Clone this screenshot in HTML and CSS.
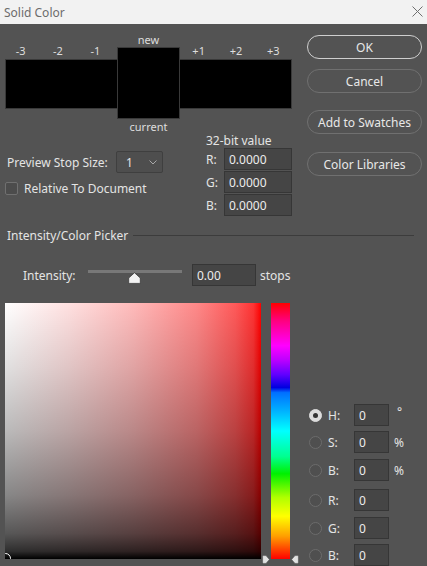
FILE: index.html
```html
<!DOCTYPE html>
<html lang="en">
<head>
<meta charset="utf-8">
<title>Solid Color</title>
<link rel="stylesheet" href="styles.css">
</head>
<body>
<div class="titlebar">
  <span class="title">Solid Color</span>
  <svg class="close" width="11" height="11" viewBox="0 0 11 11"><path d="M0.5 0.5 L10.5 10.5 M10.5 0.5 L0.5 10.5" stroke="#6f6f6f" stroke-width="1" fill="none"/></svg>
</div>
<div class="dialog">
  <div class="top">
    <div class="left">
      <div class="swatches">
        <div class="side side-left">
          <div class="labels"><span>-3</span><span>-2</span><span>-1</span></div>
          <div class="strip"></div>
        </div>
        <div class="center">
          <div class="clabel">new</div>
          <div class="cbox"></div>
          <div class="clabel current">current</div>
        </div>
        <div class="side side-right">
          <div class="labels"><span>+1</span><span>+2</span><span>+3</span></div>
          <div class="strip"></div>
        </div>
      </div>
      <div class="controls">
        <div class="prefs">
          <div class="stop-row">
            <span class="stop-label">Preview Stop Size:</span>
            <div class="select"><span>1</span>
              <svg width="8" height="5" viewBox="0 0 8 5"><path d="M0.5 0.5 L4 4 L7.5 0.5" stroke="#a8a8a8" stroke-width="1" fill="none"/></svg>
            </div>
          </div>
          <div class="check-row"><span class="checkbox"></span><span>Relative To Document</span></div>
        </div>
        <div class="bits">
          <div class="bits-title">32-bit value</div>
          <div class="bit-row"><span class="bl">R:</span><div class="field-input wide">0.0000</div></div>
          <div class="bit-row"><span class="bl">G:</span><div class="field-input wide">0.0000</div></div>
          <div class="bit-row"><span class="bl">B:</span><div class="field-input wide">0.0000</div></div>
        </div>
      </div>
    </div>
    <div class="buttons">
      <div class="btn primary b-ok">OK</div>
      <div class="btn b-cancel">Cancel</div>
      <div class="btn b-add">Add to Swatches</div>
      <div class="btn b-lib">Color Libraries</div>
    </div>
  </div>

  <div class="section"><span>Intensity/Color Picker</span><div class="rule"></div></div>

  <div class="intensity">
    <span class="int-label">Intensity:</span>
    <div class="slider">
      <div class="track"></div>
      <svg class="thumb" width="13" height="12" viewBox="0 0 13 12"><path d="M6.5 0.7 L12.3 6 L12.3 10.6 Q12.3 11.4 11.5 11.4 L1.5 11.4 Q0.7 11.4 0.7 10.6 L0.7 6 Z" fill="#f2f2f2" stroke="#3a3a3a" stroke-width="0.8"/></svg>
    </div>
    <div class="field-input int-input">0.00</div>
    <span class="stops">stops</span>
  </div>

  <div class="picker">
    <div class="color-field">
      <div class="marker"></div>
    </div>
    <div class="hue-wrap">
      <div class="hue"></div>
      <svg class="arrow arrow-l" width="8" height="9" viewBox="0 0 8 9"><path d="M0.6 1.4 Q0.6 0.6 1.4 0.6 L4 0.6 L7.4 4.5 L4 8.4 L1.4 8.4 Q0.6 8.4 0.6 7.6 Z" fill="#e2e2e2" stroke="#555" stroke-width="0.6"/></svg>
      <svg class="arrow arrow-r" width="8" height="9" viewBox="0 0 8 9"><path d="M7.4 1.4 Q7.4 0.6 6.6 0.6 L4 0.6 L0.6 4.5 L4 8.4 L6.6 8.4 Q7.4 8.4 7.4 7.6 Z" fill="#e2e2e2" stroke="#555" stroke-width="0.6"/></svg>
    </div>
    <div class="radios">
      <div class="rrow r1"><span class="radio on"></span><span class="rl">H:</span><div class="field-input small">0</div><span class="unit deg">°</span></div>
      <div class="rrow r2"><span class="radio"></span><span class="rl">S:</span><div class="field-input small">0</div><span class="unit">%</span></div>
      <div class="rrow r3"><span class="radio"></span><span class="rl">B:</span><div class="field-input small">0</div><span class="unit">%</span></div>
      <div class="rrow r4"><span class="radio"></span><span class="rl">R:</span><div class="field-input small">0</div></div>
      <div class="rrow r5"><span class="radio"></span><span class="rl">G:</span><div class="field-input small">0</div></div>
      <div class="rrow r6"><span class="radio"></span><span class="rl">B:</span><div class="field-input small">0</div></div>
    </div>
  </div>
</div>
</body>
</html>
```

FILE: styles.css
```css
* { box-sizing: border-box; }
html, body {
  margin: 0;
  padding: 0;
  width: 427px;
  height: 566px;
  overflow: hidden;
  background: #535353;
}
body {
  font-family: "Noto Sans", "Open Sans", sans-serif;
  font-size: 12px;
  color: #e4e4e4;
}

.titlebar {
  height: 24px;
  background: #f2f2f2;
  display: flex;
  align-items: center;
  padding-left: 4px;
}
.title {
  color: #6c6c6c;
  font-size: 12px;
  flex: 1;
}
.close { margin-right: 4px; margin-top: -2px; }

.dialog { display: flex; flex-direction: column; }

.top {
  display: flex;
  padding-top: 9px;
}
.left {
  margin-left: 5px;
  width: 287px;
  display: flex;
  flex-direction: column;
}

.swatches { display: flex; align-items: flex-start; }
.side { width: 112px; padding-top: 12px; }
.labels {
  display: grid;
  grid-template-columns: repeat(3, 1fr);
  height: 12px;
  line-height: 12px;
  font-size: 11px;
  text-align: center;
  color: #dedede;
}
.side-left .labels { margin-left: -3px; margin-right: 3px; }
.strip {
  margin-top: 2px;
  height: 50px;
  background: #000;
  border: 1px solid #393939;
}
.side-left .strip { border-right: none; }
.side-right .strip { border-left: none; }
.center { width: 63px; display: flex; flex-direction: column; align-items: center; }
.clabel { line-height: 14px; height: 14px; font-size: 11px; color: #dedede; }
.cbox {
  width: 63px;
  height: 72px;
  background: #000;
  border: 1px solid #393939;
}
.current { margin-top: 1px; }

.controls { display: flex; }
.prefs { width: 201px; padding-top: 17px; }
.stop-row { display: flex; align-items: center; height: 22px; }
.stop-label { width: 111px; padding-left: 2px; }
.select {
  width: 47px;
  height: 22px;
  border: 1px solid #3f3f3f;
  border-radius: 2px;
  background: #4e4e4e;
  display: flex;
  align-items: center;
  justify-content: space-between;
  padding: 0 5px 0 9px;
}
.check-row {
  display: flex;
  align-items: center;
  margin-top: 9px;
  height: 13px;
}
.checkbox {
  width: 13px;
  height: 13px;
  border: 1px solid #707070;
  border-radius: 2px;
  background: #4c4c4c;
  margin-right: 6px;
}

.bits { width: 86px; }
.bits-title { line-height: 14px; height: 14px; }
.bit-row { display: flex; align-items: center; height: 22px; margin-top: 1px; }
.bits-title + .bit-row { margin-top: 0; }
.bl { width: 18px; }

.field-input {
  height: 22px;
  background: #454545;
  border: 1px solid #363636;
  display: flex;
  align-items: center;
  padding-left: 4px;
  color: #ececec;
}
.wide { width: 68px; }

.buttons {
  margin-left: 15px;
  width: 115px;
  display: flex;
  flex-direction: column;
}
.btn {
  height: 24px;
  border: 1px solid #707070;
  border-radius: 12px;
  display: flex;
  align-items: center;
  justify-content: center;
  color: #e8e8e8;
}
.primary { border: 1.5px solid #cfcfcf; }
.b-ok { margin-top: 2px; }
.b-cancel { margin-top: 10px; }
.b-add { margin-top: 17px; }
.b-lib { margin-top: 18px; }

.section {
  display: flex;
  align-items: center;
  margin-top: 12px;
  height: 14px;
  padding-left: 7px;
  padding-right: 13px;
}
.rule { flex: 1; height: 1px; background: #3c3c3c; margin-left: 5px; }

.intensity {
  display: flex;
  align-items: center;
  margin-top: 22px;
  height: 22px;
  padding-left: 23px;
}
.int-label { width: 65px; }
.slider { position: relative; width: 94px; height: 22px; }
.track {
  margin-top: 6px;
  height: 3px;
  background: #787878;
}
.thumb { position: absolute; left: 40px; top: 8px; }
.int-input { width: 64px; margin-left: 10px; }
.stops { margin-left: 4px; }

.picker {
  display: flex;
  margin-top: 17px;
}
.color-field {
  position: relative;
  overflow: hidden;
  margin-left: 5px;
  width: 256px;
  height: 256px;
  background:
    linear-gradient(to top,
      rgba(0,0,0,1) 0%,
      rgba(0,0,0,0.82) 3%,
      rgba(0,0,0,0.66) 10%,
      rgba(0,0,0,0.47) 25%,
      rgba(0,0,0,0.27) 50%,
      rgba(0,0,0,0.12) 75%,
      rgba(0,0,0,0) 100%),
    linear-gradient(to right,
      #ffffff 0%,
      #ffe0e0 25%,
      #ffbaba 50%,
      #ff8888 75%,
      #ff5959 90%,
      #ff3434 97%,
      #ff0000 100%);
}
.marker {
  position: absolute;
  left: -5px;
  bottom: -5px;
  width: 11px;
  height: 11px;
  border: 1.5px solid #fff;
  border-radius: 50%;
}
.hue-wrap { position: relative; margin-left: 10px; width: 19px; height: 256px; }
.hue {
  width: 19px;
  height: 256px;
  background: linear-gradient(to bottom,
    #ff0000 0%,
    #ff0080 7%,
    #ff00ff 16.7%,
    #c000ff 22%,
    #6000ff 28%,
    #0000e0 33%,
    #0070ff 35%,
    #00b0ff 42%,
    #00ffff 50%,
    #00ff90 60%,
    #00f000 66.7%,
    #b0ff00 76%,
    #ffff00 83.3%,
    #ffa000 91%,
    #ff0000 100%);
}
.arrow { position: absolute; top: 252px; }
.arrow-l { left: -9px; }
.arrow-r { left: 20px; }

.radios {
  margin-left: 19px;
  padding-top: 101px;
  display: flex;
  flex-direction: column;
}
.rrow { display: flex; align-items: center; height: 22px; }
.r2 { margin-top: 5px; }
.r3 { margin-top: 6px; }
.r4 { margin-top: 8px; }
.r5 { margin-top: 6px; }
.r6 { margin-top: 5px; }
.radio {
  width: 13px;
  height: 13px;
  border-radius: 50%;
  border: 1px solid #6c6c6c;
  background: #4f4f4f;
}
.radio.on {
  background: #dcdcdc;
  border-color: #dcdcdc;
  display: flex;
  align-items: center;
  justify-content: center;
}
.radio.on::after {
  content: "";
  width: 5px;
  height: 5px;
  border-radius: 50%;
  background: #333;
}
.rl { width: 26px; margin-left: 6px; }
.small { width: 35px; }
.unit { margin-left: 5px; }
.deg { margin-left: 8px; margin-top: -8px; }
```
